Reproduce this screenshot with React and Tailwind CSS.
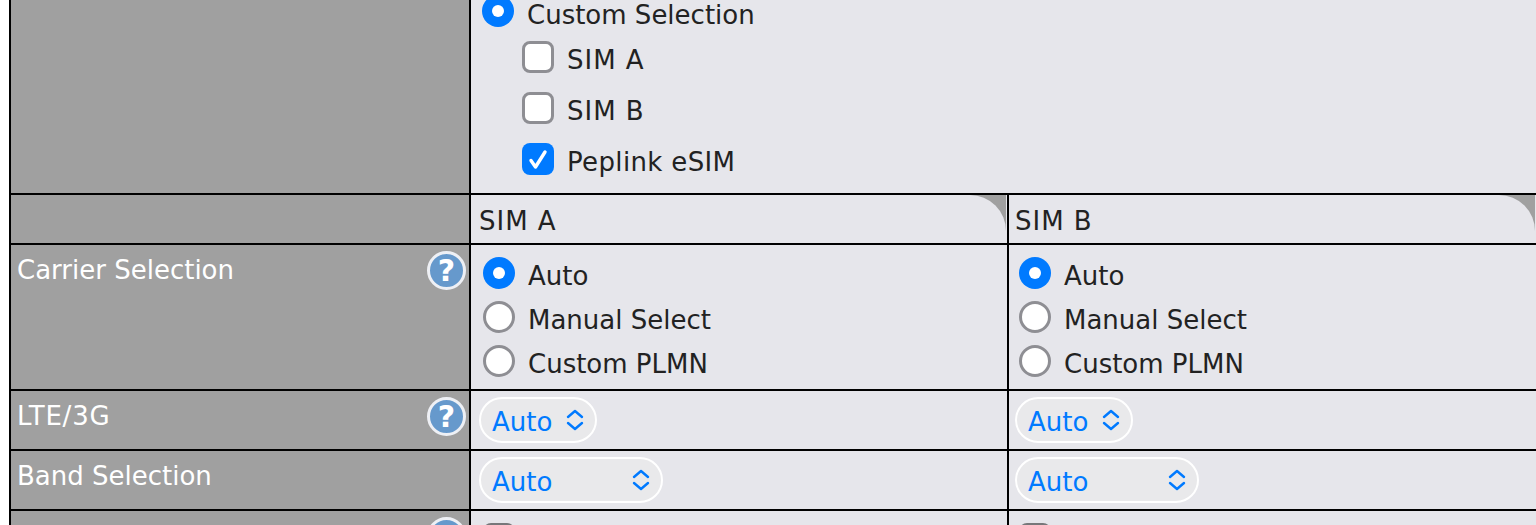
import React from 'react';

const Radio = ({ on }) => (
  <span className={`w-8 h-8 rounded-full shrink-0 flex items-center justify-center ${on ? 'bg-[#007aff]' : 'bg-white border-[3px] border-[#8e8e93]'}`}>
    {on && <span className="w-3 h-3 rounded-full bg-white" />}
  </span>
);

const Check = ({ on, dim }) => (
  <span className={`w-8 h-8 rounded-lg shrink-0 flex items-center justify-center ${on ? 'bg-[#007aff]' : dim ? 'bg-white border-[3px] border-[#77777a]' : 'bg-white border-[3px] border-[#8e8e93]'}`}>
    {on && (
      <svg width="24" height="24" viewBox="0 0 24 24" fill="none">
        <path d="M5 13.5l4.5 6.5 9.5-15" stroke="white" strokeWidth="3.4" strokeLinecap="round" strokeLinejoin="round" />
      </svg>
    )}
  </span>
);

const Help = () => (
  <span className="mt-[6px] w-[39px] h-[39px] rounded-full bg-[#6699cc] border-[3px] border-[#eef0f5] shrink-0 flex items-center justify-center text-white font-bold text-[30px] leading-none">
    ?
  </span>
);

const Select = ({ wide }) => (
  <div className={`h-[46px] rounded-[23px] border-2 border-white bg-[#e9e9eb] flex justify-between pl-[11px] pr-[11px] text-[#007aff] text-[26px] leading-[46px] ${wide ? 'w-[184px]' : 'w-[118px]'}`}>
    <span>Auto</span>
    <svg className="mt-[10px]" width="18" height="22" viewBox="0 0 18 22" fill="none">
      <path d="M2 8l7-6 7 6M2 14l7 6 7-6" stroke="#007aff" strokeWidth="2.4" strokeLinecap="round" strokeLinejoin="round" />
    </svg>
  </div>
);

const Option = ({ text, on }) => (
  <div className="h-8 flex items-start gap-[13px]">
    <Radio on={on} />
    <span className="leading-[38px]">{text}</span>
  </div>
);

const CheckOption = ({ text, on, tracking }) => (
  <div className="h-8 flex items-start gap-[13px]">
    <Check on={on} />
    <span className={`leading-[38px] ${tracking}`}>{text}</span>
  </div>
);

const CarrierOptions = ({ pad }) => (
  <div className={`${pad} pt-3 flex flex-col gap-3`}>
    <Option text="Auto" on />
    <Option text="Manual Select" />
    <Option text="Custom PLMN" />
  </div>
);

const Label = ({ text, help, tracking }) => (
  <div className="w-[460px] shrink-0 bg-[#a0a0a0] border-r-2 border-black flex justify-between text-white pl-[6px] pr-[3px]">
    <span className={`mt-[7px] ${tracking}`}>{text}</span>
    {help && <Help />}
  </div>
);

const Row = ({ height, label, help, tracking, a, b }) => (
  <div className={`flex border-b-2 border-black ${height}`}>
    <Label text={label} help={help} tracking={tracking} />
    <div className="w-[538px] shrink-0 border-r-2 border-black">{a}</div>
    <div className="flex-1">{b}</div>
  </div>
);

const Tab = ({ text, pad }) => (
  <div className={`relative h-full pt-[8px] tracking-[1px] ${pad}`}>
    {text}
    <div className="absolute top-0 right-px w-9 h-9 bg-[#a0a0a0]">
      <div className="w-full h-full bg-[#e6e6eb] rounded-tr-[36px]" />
    </div>
  </div>
);

const App = () => {
  return (
    <div className="h-[525px] w-[1536px] overflow-hidden bg-white pl-[9px] text-[#222] text-[26px] leading-[36px]" style={{ fontFamily: '"DejaVu Sans", sans-serif' }}>
      <div className="border-l-2 border-black bg-[#e6e6eb]">
        <div className="flex border-b-2 border-black h-[195px]">
          <div className="w-[460px] shrink-0 bg-[#a0a0a0] border-r-2 border-black" />
          <div className="flex-1 pl-[11px] -mt-[5px]">
            <div className="h-8 flex items-start gap-[13px]">
              <Radio on />
              <span className="leading-[40px]">Custom Selection</span>
            </div>
            <div className="pl-10 flex flex-col gap-[19px] pt-[14px]">
              <CheckOption text="SIM A" tracking="tracking-[1px]" />
              <CheckOption text="SIM B" tracking="tracking-[1px]" />
              <CheckOption text="Peplink eSIM" on tracking="tracking-[0.35px]" />
            </div>
          </div>
        </div>
        <Row height="h-[50px]" label="" a={<Tab text="SIM A" pad="pl-2" />} b={<Tab text="SIM B" pad="pl-[6px]" />} />
        <Row height="h-[146px]" label="Carrier Selection" help a={<CarrierOptions pad="pl-3" />} b={<CarrierOptions pad="pl-2.5" />} />
        <Row height="h-[60px]" label="LTE/3G" help tracking="tracking-[0.8px]" a={<div className="pl-2 pt-[6px]"><Select /></div>} b={<div className="pl-[6px] pt-[6px]"><Select /></div>} />
        <Row height="h-[60px]" label="Band Selection" a={<div className="pl-2 pt-[6px]"><Select wide /></div>} b={<div className="pl-[6px] pt-[6px]"><Select wide /></div>} />
        <Row height="h-[60px]" label="" help a={<div className="pl-3 pt-3"><Check dim /></div>} b={<div className="pl-2.5 pt-3"><Check dim /></div>} />
      </div>
    </div>
  );
};

export default App;
